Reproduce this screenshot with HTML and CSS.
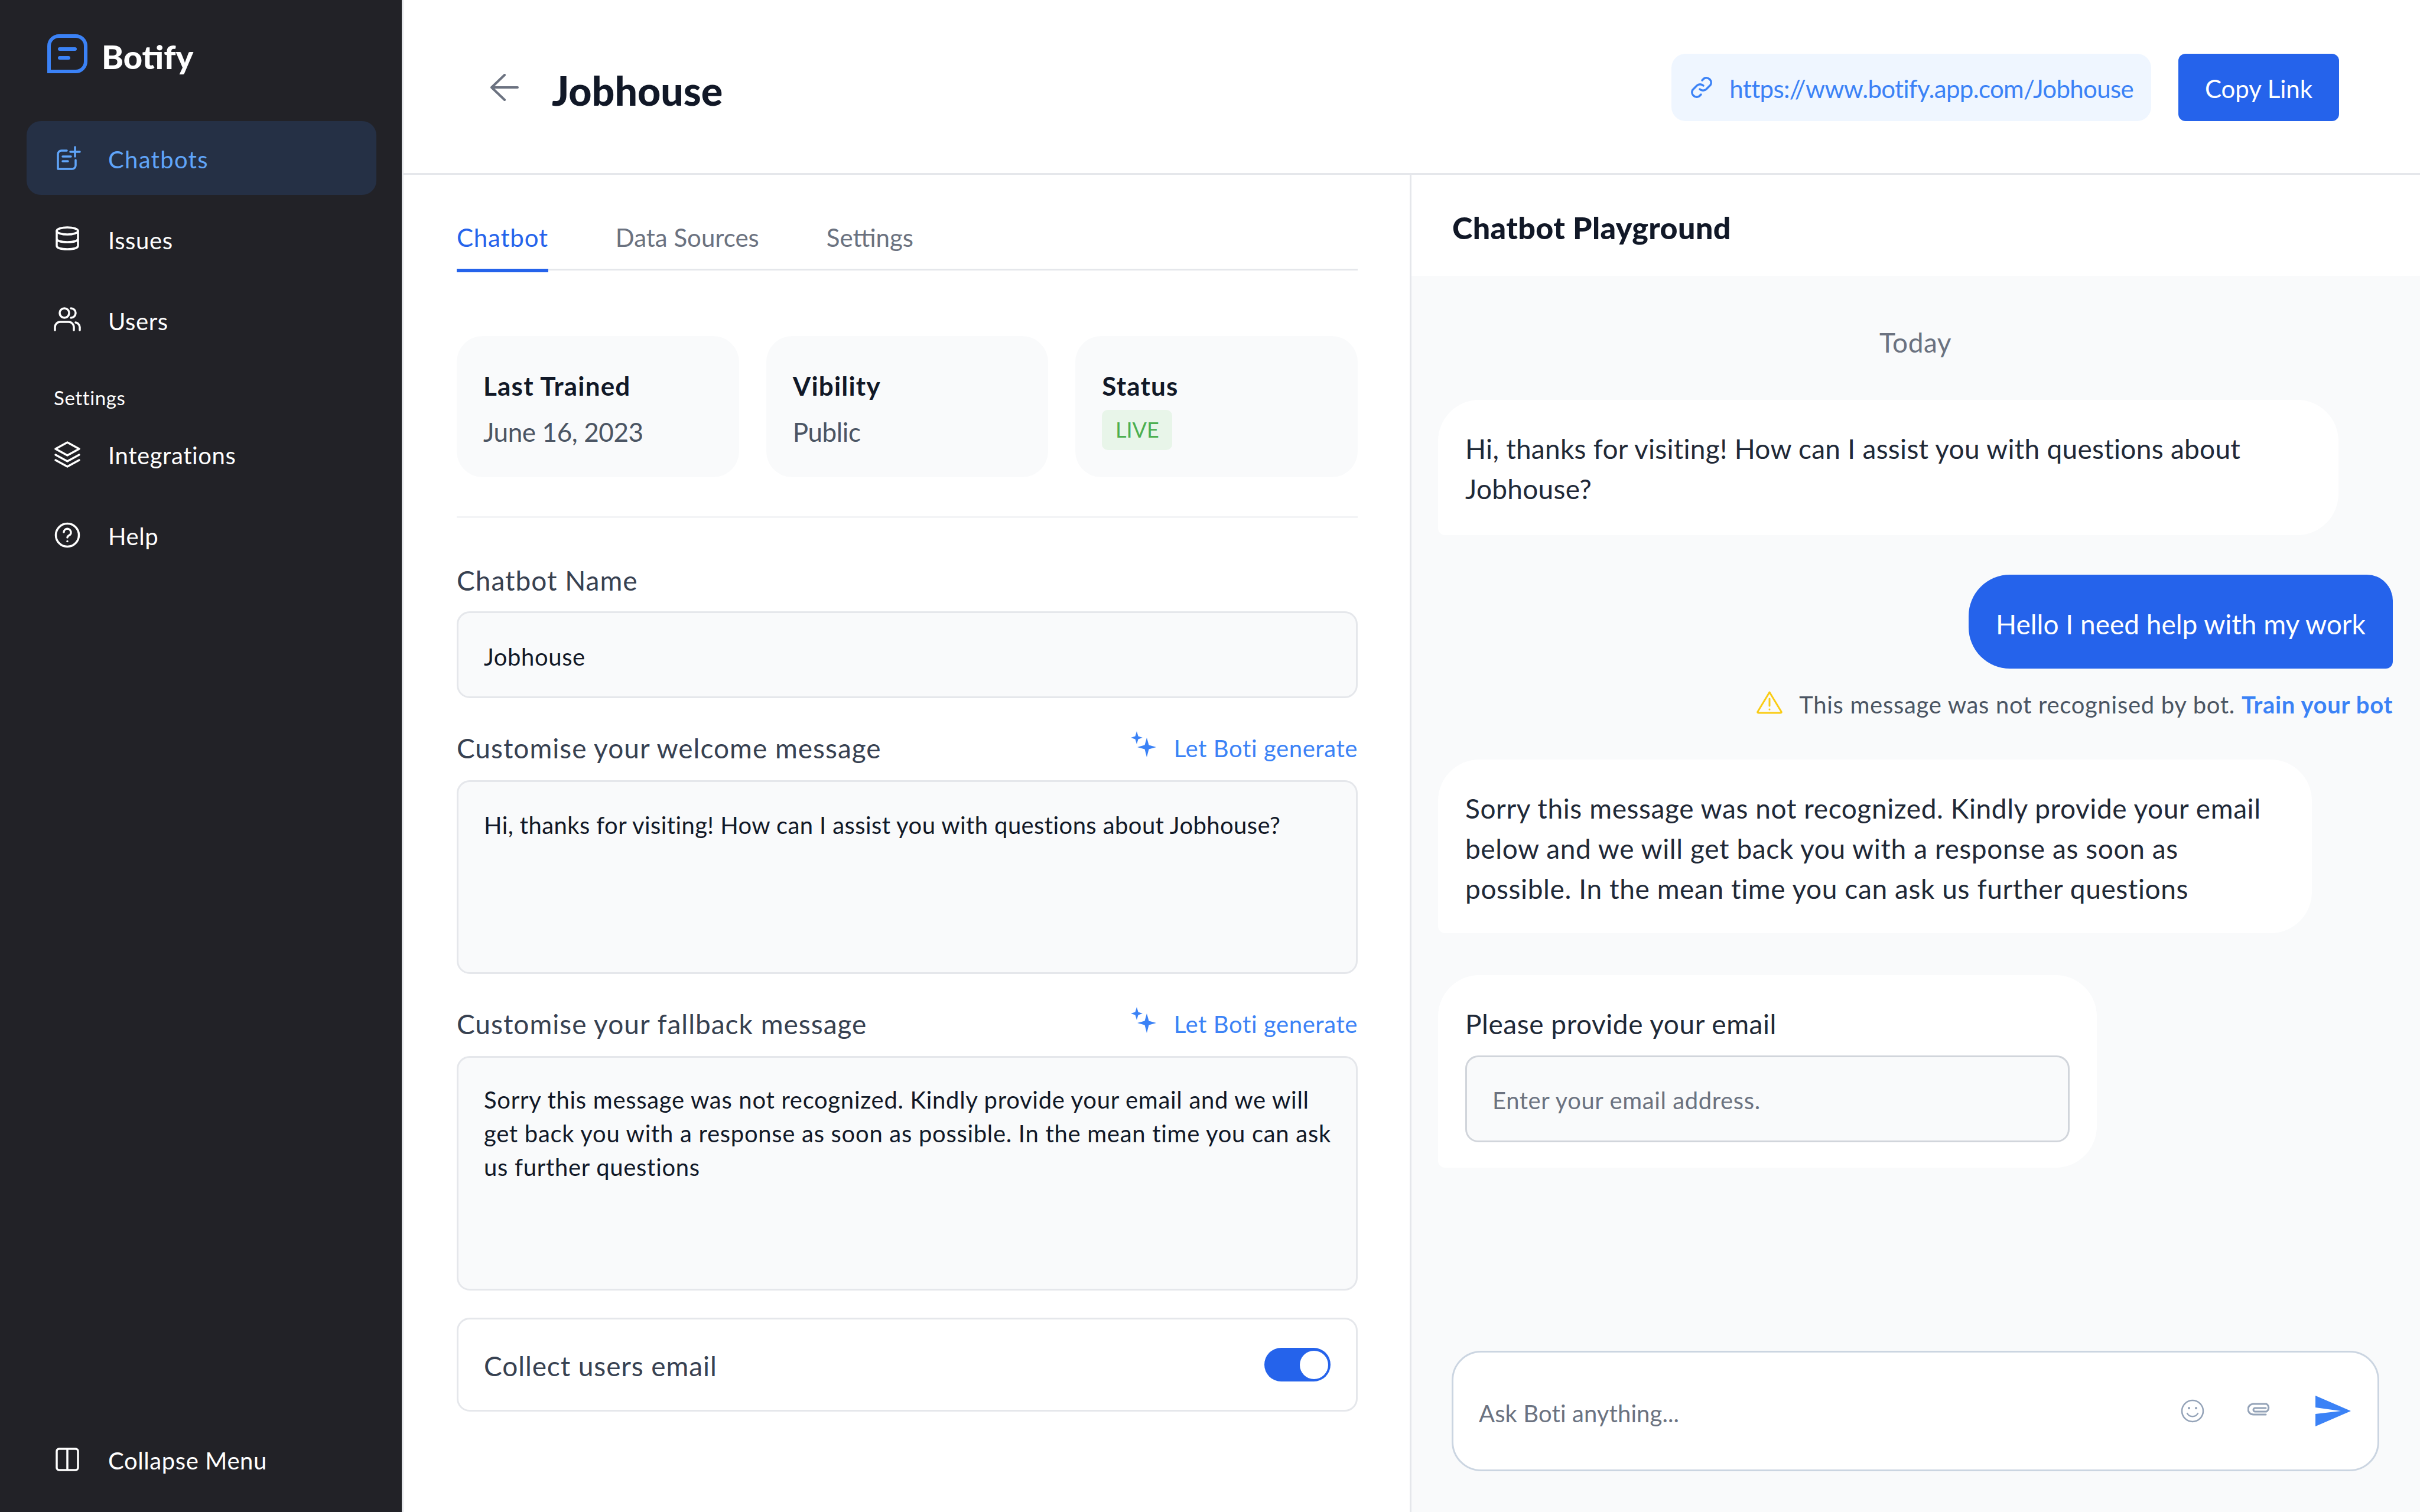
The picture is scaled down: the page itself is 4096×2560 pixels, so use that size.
FILE: index.html
```html
<!doctype html>
<html lang="en">
<head>
  <meta charset="UTF-8">
  <title>Botify - Jobhouse</title>
  <link rel="stylesheet" href="styles.css">
</head>
<body>
<div class="app">

  <!-- sidebar -->
  <aside class="sidebar">
    <div class="brand">
      <svg class="brand-icon" viewBox="0 0 68 66" fill="none" stroke="#3b82f6" stroke-width="6" stroke-linecap="round">
        <path d="M3 63V20A17 17 0 0 1 20 3H48A17 17 0 0 1 65 20V46A17 17 0 0 1 48 63Z"/>
        <path d="M21 25H47M21 40H36"/>
      </svg>
      <span class="brand-name">Botify</span>
    </div>

    <a class="nav-item active">
      <svg class="nav-icon" viewBox="0 0 48 48" fill="none" stroke="#60a5fa" stroke-width="3.5" stroke-linecap="round" stroke-linejoin="round">
        <path d="M23 11H14A6 6 0 0 0 8 17V42H32A6 6 0 0 0 38 36V27"/>
        <path d="M16 21H30M16 29H25M37 5V21M29 13H45"/>
      </svg>
      <span>Chatbots</span>
    </a>
    <a class="nav-item">
      <svg class="nav-icon" viewBox="0 0 48 48" fill="none" stroke="#fff" stroke-width="3.5" stroke-linecap="round" stroke-linejoin="round">
        <ellipse cx="24" cy="10" rx="18" ry="6"/>
        <path d="M6 10V35C6 39 14 41 24 41S42 39 42 35V10M6 23C6 27 14 29 24 29S42 27 42 23"/>
      </svg>
      <span>Issues</span>
    </a>
    <a class="nav-item">
      <svg class="nav-icon" viewBox="0 0 48 48" fill="none" stroke="#fff" stroke-width="3.5" stroke-linecap="round" stroke-linejoin="round">
        <circle cx="19" cy="12" r="8"/>
        <path d="M3 41V36A9 9 0 0 1 12 27H26A9 9 0 0 1 35 36V41M30 4A8 8 0 0 1 30 20M38 28A9 9 0 0 1 45 36V41"/>
      </svg>
      <span>Users</span>
    </a>

    <div class="nav-label">Settings</div>

    <a class="nav-item">
      <svg class="nav-icon" viewBox="0 0 48 48" fill="none" stroke="#fff" stroke-width="3.5" stroke-linecap="round" stroke-linejoin="round">
        <path d="M24 4L44 15L24 26L4 15Z"/>
        <path d="M4 25L24 36L44 25M4 34L24 45L44 34"/>
      </svg>
      <span>Integrations</span>
    </a>
    <a class="nav-item">
      <svg class="nav-icon" viewBox="0 0 48 48" fill="none" stroke="#fff" stroke-width="3.5" stroke-linecap="round" stroke-linejoin="round">
        <circle cx="24" cy="24" r="19.5"/>
        <path d="M18 19A6 6 0 1 1 26 25C24.500 25.800 24 26.500 24 28"/>
        <path d="M24 34.500V34.600"/>
      </svg>
      <span>Help</span>
    </a>

    <a class="nav-item collapse">
      <svg class="nav-icon" viewBox="0 0 48 48" fill="none" stroke="#fff" stroke-width="3.5" stroke-linejoin="round">
        <rect x="6" y="6" width="36" height="36" rx="4"/>
        <path d="M24 6V42"/>
      </svg>
      <span>Collapse Menu</span>
    </a>
  </aside>

  <div class="main">
    <header class="topbar">
      <svg class="back" viewBox="0 0 48 46" fill="none" stroke="#6b7280" stroke-width="4" stroke-linecap="round" stroke-linejoin="round">
        <path d="M46 23H2M24 2L2 23L24 44"/>
      </svg>
      <h1 class="page-title">Jobhouse</h1>
      <div class="link-pill">
        <svg class="link-icon" viewBox="0 0 42 42" fill="none" stroke="#3b82f6" stroke-width="3.500" stroke-linecap="round">
          <path d="M18 24A8 8 0 0 0 29 24L36 17A8 8 0 0 0 25 6L22 9"/>
          <path d="M24 18A8 8 0 0 0 13 18L6 25A8 8 0 0 0 17 36L20 33"/>
        </svg>
        <span>https://www.botify.app.com/Jobhouse</span>
      </div>
      <button class="copy-btn">Copy Link</button>
    </header>

    <div class="panes">
      <section class="left-pane">
        <nav class="tabs">
          <a class="tab active">Chatbot</a>
          <a class="tab">Data Sources</a>
          <a class="tab">Settings</a>
        </nav>

        <div class="stats">
          <div class="stat">
            <div class="stat-title">Last Trained</div>
            <div class="stat-value">June 16, 2023</div>
          </div>
          <div class="stat">
            <div class="stat-title">Vibility</div>
            <div class="stat-value">Public</div>
          </div>
          <div class="stat">
            <div class="stat-title">Status</div>
            <span class="badge">LIVE</span>
          </div>
        </div>

        <label class="field-label name-label">Chatbot Name</label>
        <div class="input name-input">Jobhouse</div>

        <div class="label-row">
          <label class="field-label">Customise your welcome message</label>
          <a class="generate">
            <svg class="spark" viewBox="0 0 46 46" fill="#3b82f6">
              <path d="M11 1L13.500 9.500L21 12L13.500 14.500L11 23L8.500 14.500L1 12L8.500 9.500Z"/>
              <path d="M28 12L31.500 24.500L44 28L31.500 31.500L28 45L24.500 31.500L12 28L24.500 24.500Z"/>
            </svg>
            Let Boti generate
          </a>
        </div>
        <div class="input welcome-box">Hi, thanks for visiting! How can I assist you with questions about Jobhouse?</div>

        <div class="label-row">
          <label class="field-label">Customise your fallback message</label>
          <a class="generate">
            <svg class="spark" viewBox="0 0 46 46" fill="#3b82f6">
              <path d="M11 1L13.500 9.500L21 12L13.500 14.500L11 23L8.500 14.500L1 12L8.500 9.500Z"/>
              <path d="M28 12L31.500 24.500L44 28L31.500 31.500L28 45L24.500 31.500L12 28L24.500 24.500Z"/>
            </svg>
            Let Boti generate
          </a>
        </div>
        <div class="input fallback-box">Sorry this message was not recognized. Kindly provide your email and we will<br>get back you with a response as soon as possible. In the mean time you can ask<br>us further questions</div>

        <div class="collect">
          <span class="collect-text">Collect users email</span>
          <span class="toggle"><i class="knob"></i></span>
        </div>
      </section>

      <section class="right-pane">
        <div class="play-head">Chatbot Playground</div>
        <div class="play-body">
          <div class="today">Today</div>

          <div class="bubble bubble-one">Hi, thanks for visiting! How can I assist you with questions about<br>Jobhouse?</div>

          <div class="bubble-user">Hello I need help with my work</div>

          <div class="warn">
            <svg class="warn-icon" viewBox="0 0 44 40" fill="none" stroke="#facc15" stroke-width="3" stroke-linecap="round" stroke-linejoin="round">
              <path d="M22 3L42 36C42.500 37.500 42 38 40 38H4C2 38 1.500 37.500 2 36Z"/>
              <path d="M22 14V26M22 32V32.200"/>
            </svg>
            <span>This message was not recognised by bot. <b>Train your bot</b></span>
          </div>

          <div class="bubble bubble-two">Sorry this message was not recognized. Kindly provide your email<br>below and we will get back you with a response as soon as<br>possible. In the mean time you can ask us further questions</div>

          <div class="bubble bubble-three">
            <div>Please provide your email</div>
            <div class="input email-input">Enter your email address.</div>
          </div>

          <div class="composer">
            <span class="composer-text">Ask Boti anything...</span>
            <svg class="emoji" viewBox="0 0 40 40" fill="none" stroke="#94a3b8" stroke-width="2.500" stroke-linecap="round">
              <circle cx="20" cy="20" r="18"/>
              <path d="M11 24C15 31 25 31 29 24"/>
              <path d="M14 15V15.200M26 15V15.200" stroke-width="4"/>
            </svg>
            <svg class="clip" viewBox="0 0 42 24" fill="none" stroke="#94a3b8" stroke-width="3" stroke-linecap="round">
              <path d="M31 21H10A8.500 8.500 0 0 1 10 3H32A7.500 7.500 0 0 1 32 16H13A3 3 0 0 1 13 10H31"/>
            </svg>
            <svg class="send" viewBox="0 0 60 52" fill="#3b82f6">
              <path d="M0 0L60 26L0 52V31L43 26L0 20Z"/>
            </svg>
          </div>
        </div>
      </section>
    </div>
  </div>
</div>
</body>
</html>
```

FILE: styles.css
```css
* { margin: 0; padding: 0; box-sizing: border-box; }

body {
  font-family: "Lato", "Noto Sans", sans-serif;
  color: #111827;
  background: #fff;
}

.app {
  display: flex;
  width: 4096px;
  height: 2560px;
  overflow: hidden;
}

/* sidebar */
.sidebar {
  width: 683px;
  flex: none;
  display: flex;
  flex-direction: column;
  gap: 12px;
  padding: 58px 43px 27px 45px;
  background: #222227;
  border-right: 3px solid #e5e7eb;
  color: #fff;
  font-size: 40px;
  letter-spacing: 0.6px;
}
.brand {
  display: flex;
  align-items: center;
  height: 66px;
  margin: 0 0 69px 35px;
}
.brand-icon { width: 68px; height: 66px; margin-right: 24px; }
.brand-name { font-size: 56px; font-weight: 900; letter-spacing: 0; padding-top: 8px; }

.nav-item {
  display: flex;
  align-items: center;
  height: 125px;
  padding-left: 45px;
  border-radius: 24px;
}
.nav-item span { padding-top: 5px; }
.nav-item.active { background: #253045; color: #60a5fa; letter-spacing: 1.3px; }
.nav-icon { width: 48px; height: 48px; margin-right: 45px; flex: none; }
.nav-label {
  font-size: 33px;
  margin: 33px 0 -3px 46px;
  line-height: 48px;
}
.collapse { margin-top: auto; }

/* top bar */
.main { flex: 1; display: flex; flex-direction: column; min-width: 0; }
.topbar {
  height: 296px;
  flex: none;
  display: flex;
  align-items: flex-start;
  padding: 91px 137px 0 147px;
  border-bottom: 3px solid #e5e7eb;
}
.back { width: 48px; height: 46px; margin: 34px 56px 0 0; }
.page-title {
  font-size: 68px;
  font-weight: 900;
  line-height: 114px;
  padding-top: 5px;
  flex: 1;
}
.link-pill {
  display: flex;
  align-items: center;
  height: 114px;
  padding: 4px 30px 0;
  border-radius: 24px;
  background: #eff6ff;
  color: #3b82f6;
  font-size: 42px;
  letter-spacing: -0.66px;
}
.link-icon { width: 42px; height: 42px; margin: -4px 26px 0 0; }
.copy-btn {
  height: 114px;
  width: 272px;
  margin-left: 46px;
  padding-top: 4px;
  border: none;
  border-radius: 12px;
  background: #2563eb;
  color: #fff;
  font: inherit;
  font-size: 42px;
}

.panes { flex: 1; display: flex; min-height: 0; }

/* left pane */
.left-pane {
  width: 1706px;
  flex: none;
  padding: 82px 88px 0 90px;
  border-right: 3px solid #e5e7eb;
}
.tabs {
  display: flex;
  gap: 114px;
  border-bottom: 3px solid #e5e7eb;
  font-size: 42px;
  line-height: 48px;
  color: #6b7280;
}
.tab { padding-bottom: 29px; border-bottom: 6px solid transparent; margin-bottom: -6px; }
.tab.active { color: #2563eb; border-bottom-color: #2563eb; letter-spacing: 0.8px; }

.stats {
  display: grid;
  grid-template-columns: repeat(3, 1fr);
  gap: 46px;
  margin-top: 111px;
  padding-bottom: 66px;
  border-bottom: 3px solid #f3f4f6;
}
.stat {
  height: 239px;
  padding: 54px 45px 0;
  border-radius: 44px;
  background: #f9fafb;
}
.stat-title { font-size: 44px; font-weight: 700; line-height: 60px; letter-spacing: 1.2px; }
.stat-value { margin-top: 18px; font-size: 44px; line-height: 60px; color: #4b5563; letter-spacing: -0.4px; }
.badge {
  display: inline-block;
  margin-top: 11px;
  width: 119px;
  height: 68px;
  border-radius: 10px;
  background: #e8f5e9;
  color: #4caf50;
  font-size: 36px;
  line-height: 66px;
  text-align: center;
}

.field-label {
  font-size: 46px;
  line-height: 56px;
  color: #374151;
  letter-spacing: 1px;
}
.name-label { display: block; margin: 78px 0 24px; }
.label-row {
  display: flex;
  justify-content: space-between;
  align-items: center;
  height: 56px;
  margin: 57px 0 26px;
}
.generate {
  display: flex;
  align-items: center;
  font-size: 40px;
  letter-spacing: 0.6px;
  color: #3b82f6;
}
.spark { width: 46px; height: 46px; margin: -14px 28px 0 0; }

.input {
  padding: 0 43px;
  border: 3px solid #e5e7eb;
  border-radius: 22px;
  background: #f9fafb;
  font-size: 40px;
  line-height: 57px;
  letter-spacing: 0.6px;
}
.name-input { height: 147px; padding-top: 46px; }
.welcome-box { height: 328px; padding-top: 45px; letter-spacing: 0.4px; }
.fallback-box { height: 397px; padding: 43px 0 0 43px; letter-spacing: 0.7px; white-space: nowrap; }

.collect {
  display: flex;
  align-items: center;
  justify-content: space-between;
  height: 159px;
  margin-top: 46px;
  padding: 0 43px;
  border: 3px solid #e5e7eb;
  border-radius: 22px;
  font-size: 46px;
  letter-spacing: 0.9px;
  color: #374151;
}
.collect-text { padding-top: 4px; }
.toggle {
  display: flex;
  justify-content: flex-end;
  align-items: center;
  width: 112px;
  height: 57px;
  padding: 0 4px;
  border-radius: 29px;
  background: #2563eb;
}
.knob { width: 48px; height: 48px; border-radius: 50%; background: #fff; }

/* playground */
.right-pane { flex: 1; display: flex; flex-direction: column; min-width: 0; }
.play-head {
  height: 171px;
  flex: none;
  padding: 57px 0 0 69px;
  font-size: 52px;
  font-weight: 900;
  line-height: 64px;
  letter-spacing: 0.4px;
}
.play-body {
  flex: 1;
  display: flex;
  flex-direction: column;
  padding: 85px 46px 69px 45px;
  background: #f9fafb;
  font-size: 46px;
  line-height: 68px;
  color: #1f2937;
}
.today { text-align: center; color: #6b7280; line-height: 56px; letter-spacing: 0.5px; }
.bubble {
  padding: 49px 46px 41px;
  border-radius: 70px 70px 70px 12px;
  background: #fff;
  letter-spacing: 0.45px;
}
.bubble-one { width: 1524px; margin-top: 69px; padding-bottom: 44px; letter-spacing: 0.28px; }
.bubble-two { width: 1479px; margin-top: 67px; letter-spacing: 0.6px; }
.bubble-three { width: 1115px; height: 326px; margin-top: 71px; letter-spacing: 0.55px; }
.bubble-user {
  align-self: flex-end;
  height: 159px;
  margin-top: 67px;
  padding: 50px 46px 0;
  border-radius: 70px 44px 12px 70px;
  background: #2563eb;
  color: #fff;
}
.warn {
  display: flex;
  justify-content: flex-end;
  align-items: center;
  margin-top: 35px;
  font-size: 40px;
  line-height: 52px;
  letter-spacing: 0.7px;
  color: #4b5563;
}
.warn b { color: #3b82f6; font-weight: 700; }
.warn-icon { width: 44px; height: 40px; margin: -8px 28px 0 0; }
.email-input {
  height: 147px;
  margin-top: 19px;
  padding-top: 45px;
  border-color: #d1d5db;
  color: #6b7280;
}

.composer {
  display: flex;
  align-items: center;
  height: 204px;
  margin: auto 23px 0;
  padding: 0 45px 0 43px;
  border: 3px solid #cbd5e1;
  border-radius: 50px;
  background: #fff;
  font-size: 40px;
  letter-spacing: 0.1px;
  color: #6b7280;
}
.composer-text { flex: 1; padding-top: 8px; }
.emoji { width: 40px; height: 40px; margin-right: 73px; }
.clip { width: 42px; height: 24px; margin: -6px 73px 0 0; }
.send { width: 60px; height: 52px; }
```
